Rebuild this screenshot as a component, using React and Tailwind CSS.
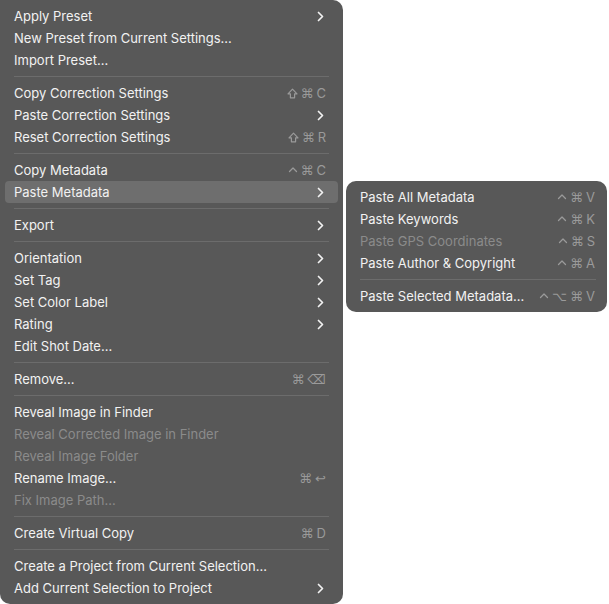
const MAIN = [
  [
    { label: 'Apply Preset', sub: true },
    { label: 'New Preset from Current Settings...' },
    { label: 'Import Preset...' },
  ],
  [
    { label: 'Copy Correction Settings', keys: '⇧⌘C' },
    { label: 'Paste Correction Settings', sub: true },
    { label: 'Reset Correction Settings', keys: '⇧⌘R' },
  ],
  [
    { label: 'Copy Metadata', keys: '⌃⌘C' },
    { label: 'Paste Metadata', sub: true, active: true },
  ],
  [{ label: 'Export', sub: true }],
  [
    { label: 'Orientation', sub: true },
    { label: 'Set Tag', sub: true },
    { label: 'Set Color Label', sub: true },
    { label: 'Rating', sub: true },
    { label: 'Edit Shot Date...' },
  ],
  [{ label: 'Remove...', keys: '⌘⌫' }],
  [
    { label: 'Reveal Image in Finder' },
    { label: 'Reveal Corrected Image in Finder', disabled: true },
    { label: 'Reveal Image Folder', disabled: true },
    { label: 'Rename Image...', keys: '⌘↩' },
    { label: 'Fix Image Path...', disabled: true },
  ],
  [{ label: 'Create Virtual Copy', keys: '⌘D' }],
  [
    { label: 'Create a Project from Current Selection...' },
    { label: 'Add Current Selection to Project', sub: true },
  ],
];

const SUB = [
  [
    { label: 'Paste All Metadata', keys: '⌃⌘V' },
    { label: 'Paste Keywords', keys: '⌃⌘K' },
    { label: 'Paste GPS Coordinates', keys: '⌃⌘S', disabled: true },
    { label: 'Paste Author & Copyright', keys: '⌃⌘A' },
  ],
  [{ label: 'Paste Selected Metadata...', keys: '⌃⌥⌘V' }],
];

function Chevron() {
  return (
    <svg width="7" height="11" viewBox="0 0 7 11" className="mr-[2px]">
      <path d="M1.5 1.5 L5.5 5.5 L1.5 9.5" fill="none" stroke="#f2f2f2" strokeWidth="1.7" strokeLinecap="round" strokeLinejoin="round" />
    </svg>
  );
}

// ⇧ and ⌃ come out too small in the fallback fonts, so they are drawn
function KeyGlyph({ k }) {
  if (k === '⇧') {
    return (
      <svg width="11" height="11" viewBox="0 0 11 11">
        <path d="M5.5 1.2 L10 5.8 H7.6 V9.8 H3.4 V5.8 H1 Z" fill="none" stroke="#9a9a9a" strokeWidth="1.2" strokeLinejoin="round" />
      </svg>
    );
  }
  if (k === '⌃') {
    return (
      <svg width="10" height="11" viewBox="0 0 10 11">
        <path d="M1.5 6.5 L5 3 L8.5 6.5" fill="none" stroke="#9a9a9a" strokeWidth="1.3" strokeLinecap="round" strokeLinejoin="round" />
      </svg>
    );
  }
  if (/[A-Z]/.test(k)) return <span>{k}</span>;
  return <span className="font-['DejaVu_Sans'] text-[13px]">{k}</span>;
}

function Keys({ keys }) {
  return (
    <span className="flex items-center gap-[3px] text-[13px] text-[#9a9a9a]">
      {[...keys].map((k, i) => (
        <KeyGlyph key={i} k={k} />
      ))}
    </span>
  );
}

function Item({ item, pr }) {
  return (
    <div className={`flex h-[22px] items-center justify-between rounded-[4px] pl-[9px] ${pr} ${item.active ? 'bg-[#6e6e6e]' : ''}`}>
      <span className={item.disabled ? 'text-[#8b8b8b]' : 'text-[#f2f2f2]'}>{item.label}</span>
      {item.sub && <Chevron />}
      {item.keys && <Keys keys={item.keys} />}
    </div>
  );
}

function Menu({ groups, className, pr = 'pr-[12px]', lineR = 'mr-[9px]' }) {
  return (
    <div className={`bg-[#585858] px-[5px] py-[5px] ${className}`}>
      {groups.map((g, i) => (
        <div key={i}>
          {i > 0 && <div className={`ml-[9px] ${lineR} my-[5px] h-px bg-[#6c6c6c]`} />}
          {g.map((item) => (
            <Item key={item.label} item={item} pr={pr} />
          ))}
        </div>
      ))}
    </div>
  );
}

export default function App() {
  return (
    <div className="flex h-[604px] w-[609px] items-start gap-[3px] bg-white font-['Inter','Liberation_Sans',sans-serif] text-[13px] leading-none">
      <Menu groups={MAIN} className="w-[343px] rounded-tr-[10px] rounded-b-[10px]" />
      <Menu groups={SUB} className="mt-[181px] w-[261px] rounded-[10px]" pr="pr-[7px]" lineR="mr-[6px]" />
    </div>
  );
}
